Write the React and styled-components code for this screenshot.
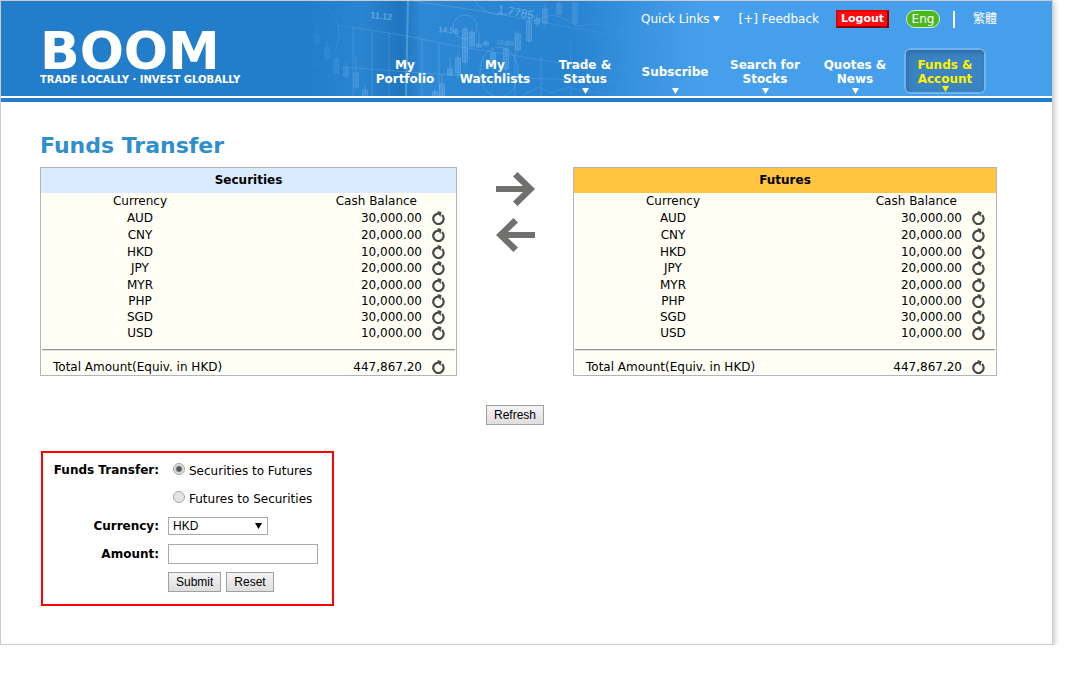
import { useState } from 'react';
import styled, { createGlobalStyle } from 'styled-components';


const GlobalStyle = createGlobalStyle`
    * {
        box-sizing: border-box;
    }
    body {
        margin: 0;
        background-color: #fff;
        color: #000;
        font-family: Verdana, "DejaVu Sans", "Noto Sans CJK TC", sans-serif;
        font-size: 12px;
        line-height: 16px;
    }
`

const Page = styled.div`
    margin-right: 17px;
    border: 1px solid #ccc;
    box-shadow: 2px 2px 5px rgba(0, 0, 0, 0.2);
`

const Header = styled.header`
    position: relative;
    display: flex;
    justify-content: space-between;
    height: 95px;
    background: linear-gradient(to right, #227ecb 0, #227ecb 300px, #2a86d4 560px, #469feb 700px);
    color: white;
`
const HeaderLine = styled.div`
    height: 4px;
    margin-top: 2px;
    background-color: #227ecb;
`
const Art = styled.svg`
    position: absolute;
    left: 300px;
    top: 0;
`
const Brand = styled.a`
    padding: 27px 0 0 39px;
    color: white;
    text-decoration: none;
    font-weight: bold;
    white-space: nowrap;
`
const BrandName = styled.div`
    font-size: 52px;
    line-height: 46px;
`
const Tagline = styled.div`
    font-size: 10px;
    line-height: 12px;
`
const HeaderRight = styled.div`
    position: relative;
    display: flex;
    flex-direction: column;
    align-items: flex-end;
`
const TopLinks = styled.div`
    display: flex;
    align-items: center;
    height: 36px;
    padding-right: 55px;
    white-space: nowrap;
`
const TopLink = styled.a`
    display: flex;
    align-items: center;
    gap: 3px;
    margin-right: ${props => props.$space || 0}px;
    color: white;
    text-decoration: none;
`
const Logout = styled.button`
    width: 53px;
    height: 18px;
    margin-right: 17px;
    padding: 0;
    border: 2px outset #e00000;
    background-color: #ff0a0e;
    color: white;
    font: bold 11px/12px Verdana, "DejaVu Sans", sans-serif;
`
const Lang = styled.button`
    width: 34px;
    height: 18px;
    margin-right: 13px;
    padding: 0;
    border: 1px solid #d5f0c8;
    border-radius: 9px;
    background-color: #48b81e;
    color: white;
    font: 12px/14px Verdana, "DejaVu Sans", sans-serif;
`
const Divider = styled.span`
    width: 2px;
    height: 17px;
    margin-right: 18px;
    background-color: white;
`

const Nav = styled.nav`
    display: flex;
    gap: 8px;
    margin-top: 11px;
    padding-right: 66px;
`
const NavItem = styled.a`
    display: flex;
    flex-direction: column;
    align-items: center;
    gap: ${props => props.$active ? 0 : 2}px;
    width: 82px;
    height: 46px;
    padding-top: 10px;
    border-radius: 6px;
    color: ${props => props.$active ? "#fff200" : "white"};
    background-color: ${props => props.$active ? "#3a84c2" : "transparent"};
    box-shadow: ${props => props.$active ? "inset 0 0 0 2px #6fb4ee, inset 0 4px 5px #2b67a0, inset 4px 0 5px #2f72ad" : "none"};
    font-weight: bold;
    line-height: 14px;
    text-align: center;
    text-decoration: none;

    svg {
        flex-shrink: 0;
    }
`
const NavText = styled.span`
    display: flex;
    flex-direction: column;
    justify-content: center;
    flex-shrink: 0;
    height: 28px;
    white-space: nowrap;
`

const Content = styled.main`
    padding: 30px 55px 38px 39px;
`
const Title = styled.h1`
    margin: 0 0 8px;
    color: #2f8fcb;
    font-size: 22px;
    line-height: 27px;
`
const Accounts = styled.div`
    display: grid;
    grid-template-columns: 417fr 116px 424fr;
    row-gap: 29px;
`
const Arrows = styled.div`
    display: flex;
    flex-direction: column;
    align-items: center;
    gap: 12px;
    padding-top: 5px;
`
const Panel = styled.section`
    border: 1px solid #adb5bd;
    background-color: #fffff6;
`
const PanelTitle = styled.h2`
    margin: 0;
    background-color: ${props => props.$color};
    font-size: 12px;
    line-height: 25px;
    text-align: center;
`
const Table = styled.table`
    width: 100%;
    table-layout: fixed;
    border-collapse: collapse;
    line-height: 14px;

    th, td {
        height: 17px;
        padding: 0;
        font-weight: normal;
    }
    thead th, thead td {
        height: 16px;
    }
    tbody tr:nth-child(4) td, tbody tr:nth-child(6) td {
        height: 16px;
    }
    tbody tr:nth-child(7) td {
        height: 15px;
    }
`
const CurrencyCol = styled.col`
    width: 198px;
`
const ReloadCol = styled.col`
    width: 34px;
`
const Centered = styled.td`
    text-align: center;
`
const Amount = styled.td`
    text-align: right;
`
const BalanceHead = styled.th`
    && {
        padding-right: 5px;
    }
    text-align: right;
`
const TotalLabel = styled.th`
    && {
        padding-left: 12px;
    }
    text-align: left;
    white-space: nowrap;
`
const Rule = styled.hr`
    height: 2px;
    margin: 7px 1px;
    border: 0;
    border-top: 1px solid #999;
    border-bottom: 1px solid #ddd;
`
const Reload = styled.button`
    display: block;
    width: 13px;
    height: 14px;
    margin-left: 10px;
    padding: 0;
    border: 0;
    background: none;

    svg {
        display: block;
    }
`
const Button = styled.button`
    height: 20px;
    padding: 0 7px;
    border: 1px solid #a0a0a0;
    background: linear-gradient(#f4f4f4, #dedede);
    color: #000;
    font: 12px/16px Arial, "Liberation Sans", sans-serif;
`
const RefreshButton = styled(Button)`
    grid-column: 2;
    justify-self: center;
`

const Form = styled.form`
    display: grid;
    grid-template-columns: 116px 1fr;
    grid-auto-rows: 28px;
    column-gap: 9px;
    align-items: center;
    width: 293px;
    margin: 26px 0 0 1px;
    padding: 3px 0 8px;
    border: 2px solid #f00;
`
const Label = styled.label`
    font-weight: bold;
    text-align: right;
    white-space: nowrap;
`
const Choice = styled.label`
    display: flex;
    align-items: center;
    grid-column: 2;
    gap: 4px;
    padding: 2px 0 0 5px;
    white-space: nowrap;
`
const Radio = styled.input`
    appearance: none;
    width: 12px;
    height: 12px;
    margin: 0 0 4px;
    border: 1px solid #a5a5a5;
    border-radius: 50%;
    background: #e4e4e4;

    &:checked {
        background: radial-gradient(circle, #555 0, #555 2px, #e4e4e4 4px);
    }
`
const SelectBox = styled.div`
    display: grid;
    align-items: center;
    width: 100px;

    > * {
        grid-area: 1 / 1;
    }
    svg {
        justify-self: end;
        margin-right: 6px;
        pointer-events: none;
    }
`
const Select = styled.select`
    appearance: none;
    width: 100%;
    height: 18px;
    padding: 0 4px;
    border: 1px solid #a9a9a9;
    border-radius: 0;
    background-color: white;
    color: #000;
    font: 12px/16px Arial, "Liberation Sans", sans-serif;
`
const TextInput = styled.input`
    width: 150px;
    height: 20px;
    padding: 0 4px;
    border: 1px solid #a9a9a9;
    font: 12px/16px Arial, "Liberation Sans", sans-serif;
`
const Buttons = styled.div`
    display: flex;
    grid-column: 2;
    gap: 5px;
`


const navItems = [
  { lines: ["My", "Portfolio"] },
  { lines: ["My", "Watchlists"] },
  { lines: ["Trade &", "Status"], menu: true },
  { lines: ["Subscribe"], menu: true },
  { lines: ["Search for", "Stocks"], menu: true },
  { lines: ["Quotes &", "News"], menu: true },
  { lines: ["Funds &", "Account"], menu: true, active: true },
];

const balances = [
  { currency: "AUD", amount: "30,000.00" },
  { currency: "CNY", amount: "20,000.00" },
  { currency: "HKD", amount: "10,000.00" },
  { currency: "JPY", amount: "20,000.00" },
  { currency: "MYR", amount: "20,000.00" },
  { currency: "PHP", amount: "10,000.00" },
  { currency: "SGD", amount: "30,000.00" },
  { currency: "USD", amount: "10,000.00" },
];

// x, top of wick, top of body, body height, bottom of wick
const candles = [
  [16, 22, 34, 8, 44],
  [26, 40, 46, 10, 60],
  [35, 54, 58, 14, 76],
  [45, 60, 66, 9, 78],
  [55, 55, 72, 14, 90],
  [64, 84, 89, 7, 96],
  [134, 88, 91, 5, 96],
  [141, 74, 83, 12, 96],
  [149, 56, 68, 6, 74],
  [157, 50, 57, 15, 78],
  [164, 25, 28, 33, 64],
  [171, 27, 31, 14, 48],
  [178, 30, 43, 3, 46],
  [185, 39, 41, 3, 46],
  [192, 48, 52, 12, 72],
  [205, 40, 48, 20, 80],
  [217, 30, 33, 16, 52],
  [228, 14, 20, 20, 42],
  [236, 12, 18, 5, 26],
  [244, 2, 8, 14, 28],
  [258, 0, 3, 10, 16],
  [274, 0, 2, 20, 26],
];

const Caret = ({ size = 7, color = "currentColor" }) => (
  <svg width={size} height="6" viewBox="0 0 7 6" aria-hidden="true">
    <path d="M0 0h7L3.5 6z" fill={color} />
  </svg>
)

const HeaderArt = () => (
  <Art width="400" height="95" viewBox="0 0 400 95" fill="none" aria-hidden="true">
    <defs>
      <linearGradient id="artGlow">
        <stop offset="0" stopColor="#227ecb" stopOpacity="0" />
        <stop offset="0.15" stopColor="#3a92dc" stopOpacity="0.3" />
        <stop offset="0.25" stopColor="#14599c" stopOpacity="0.3" />
        <stop offset="0.3" stopColor="#3a92dc" stopOpacity="0.4" />
        <stop offset="0.7" stopColor="#1f78c4" stopOpacity="0.3" />
        <stop offset="1" stopColor="#469feb" stopOpacity="0" />
      </linearGradient>
      <linearGradient id="artFade">
        <stop offset="0" stopColor="black" />
        <stop offset="0.15" stopColor="#bbb" />
        <stop offset="0.3" stopColor="white" />
        <stop offset="0.6" stopColor="#ccc" />
        <stop offset="0.9" stopColor="black" />
      </linearGradient>
      <mask id="artMask">
        <rect width="400" height="95" fill="url(#artFade)" />
      </mask>
    </defs>
    <rect width="400" height="95" fill="url(#artGlow)" />
    <g mask="url(#artMask)" stroke="#7dbcf0">
      <g strokeOpacity="0.35">
        <path d="M36 24L100 34L160 46L260 62L400 80M112 0L180 10L400 50M40 66L150 74L400 84" />
        <path d="M52 26V95M71 30V95M88 32V95M121 40V95M138 42V95M214 30V95M240 56V95M270 38V95" />
        <path d="M107 0L105 95" strokeWidth="2" strokeOpacity="0.5" />
      </g>
      <g strokeOpacity="0.4">
        <circle cx="4" cy="33" r="34" />
        <circle cx="164" cy="26" r="12" />
        <ellipse cx="198" cy="71" rx="19" ry="25" />
        <path d="M174 0C182 12 196 16 208 12C220 6 230 16 240 18C256 8 266 22 280 26C300 16 310 34 326 30C346 30 370 24 400 34" />
        <path d="M222 94L238 86L250 92L268 86L282 90L300 92L320 94" />
      </g>
      <g strokeOpacity="0.4" fill="#8cc4f2" fillOpacity="0.25">
        {candles.map(([x, top, body, height, bottom]) => (
          <g key={x}>
            <path d={`M${x} ${top}V${bottom}`} />
            <rect x={x - 2.5} y={body} width="5" height={height} />
          </g>
        ))}
      </g>
    </g>
    <g fill="#8cc4f2" fillOpacity="0.6" fontFamily="Liberation Sans" fontSize="9" fontWeight="bold">
      <text x="69" y="17" transform="rotate(6 69 17)">11.12</text>
      <text x="137" y="31" fontSize="8" transform="rotate(6 137 31)" fillOpacity="0.5">14.56</text>
      <text x="195" y="43" fontSize="7" transform="rotate(6 195 43)" fillOpacity="0.4">15.60</text>
      <text x="196" y="12" fontSize="12" fontWeight="normal" transform="rotate(10 196 12)">1.7785</text>
    </g>
  </Art>
)

const ReloadButton = ({ label }) => (
  <Reload type="button" aria-label={label}>
    <svg width="13" height="14" viewBox="0 0 13 14">
      <path d="M6.300 2.600A5.200 5.200 0 1 0 10 4" fill="none" stroke="#484848" strokeWidth="2.200" />
      <path d="M5.800 0L9.600 1.200L8.400 6L6.800 3.800L5.400 3.600z" fill="#484848" />
    </svg>
  </Reload>
)

const TransferArrow = ({ left }) => (
  <svg width="39" height="34" viewBox="0 0 39 34" aria-hidden="true">
    <path
      d="M0 14H27L17 4.500L21.500 0L39 17L21.500 34L17 29.500L27 20H0z"
      fill="#70706e"
      transform={left ? "matrix(-1 0 0 1 39 0)" : undefined}
    />
  </svg>
)

const AccountPanel = ({ title, color }) => (
  <Panel>
    <PanelTitle $color={color}>{title}</PanelTitle>
    <Table aria-label={title}>
      <colgroup>
        <CurrencyCol />
        <col />
        <ReloadCol />
      </colgroup>
      <thead>
        <tr>
          <th scope="col">Currency</th>
          <BalanceHead scope="col">Cash Balance</BalanceHead>
          <td></td>
        </tr>
      </thead>
      <tbody>
        {balances.map(row => (
          <tr key={row.currency}>
            <Centered>{row.currency}</Centered>
            <Amount>{row.amount}</Amount>
            <td><ReloadButton label={`Reload ${row.currency}`} /></td>
          </tr>
        ))}
      </tbody>
      <tfoot>
        <tr>
          <td colSpan={3}><Rule /></td>
        </tr>
        <tr>
          <TotalLabel scope="row">Total Amount(Equiv. in HKD)</TotalLabel>
          <Amount>447,867.20</Amount>
          <td><ReloadButton label="Reload total" /></td>
        </tr>
      </tfoot>
    </Table>
  </Panel>
)

const TransferForm = () => {
  const [direction, setDirection] = useState("futures");

  return (
    <Form onSubmit={e => e.preventDefault()}>
      <Label as="span">Funds Transfer:</Label>
      <Choice>
        <Radio type="radio" name="direction" checked={direction === "futures"} onChange={() => setDirection("futures")} />
        Securities to Futures
      </Choice>
      <Choice>
        <Radio type="radio" name="direction" checked={direction === "securities"} onChange={() => setDirection("securities")} />
        Futures to Securities
      </Choice>
      <Label htmlFor="currency">Currency:</Label>
      <SelectBox>
        <Select id="currency" defaultValue="HKD">
          {balances.map(row => <option key={row.currency}>{row.currency}</option>)}
        </Select>
        <Caret color="#000" />
      </SelectBox>
      <Label htmlFor="amount">Amount:</Label>
      <TextInput id="amount" type="text" />
      <Buttons>
        <Button type="submit">Submit</Button>
        <Button type="reset">Reset</Button>
      </Buttons>
    </Form>
  )
}

const App = () => {
  return (
    <>
      <GlobalStyle />
      <Page>
        <Header>
          <HeaderArt />
          <Brand href="#">
            <BrandName>BOOM</BrandName>
            <Tagline>TRADE LOCALLY · INVEST GLOBALLY</Tagline>
          </Brand>
          <HeaderRight>
            <TopLinks>
              <TopLink href="#" $space={19}>Quick Links <Caret size={7} /></TopLink>
              <TopLink href="#" $space={17}>[+] Feedback</TopLink>
              <Logout type="button">Logout</Logout>
              <Lang type="button">Eng</Lang>
              <Divider />
              <TopLink href="#" lang="zh-Hant">繁體</TopLink>
            </TopLinks>
            <Nav>
              {navItems.map(item => (
                <NavItem key={item.lines.join(" ")} href="#" $active={item.active}>
                  <NavText>
                    {item.lines.map(line => <span key={line}>{line}</span>)}
                  </NavText>
                  {item.menu && <Caret />}
                </NavItem>
              ))}
            </Nav>
          </HeaderRight>
        </Header>
        <HeaderLine />
        <Content>
          <Title>Funds Transfer</Title>
          <Accounts>
            <AccountPanel title="Securities" color="#dbebff" />
            <Arrows>
              <TransferArrow />
              <TransferArrow left />
            </Arrows>
            <AccountPanel title="Futures" color="#ffc440" />
            <RefreshButton type="button">Refresh</RefreshButton>
          </Accounts>
          <TransferForm />
        </Content>
      </Page>
    </>
  )
}

export default App
